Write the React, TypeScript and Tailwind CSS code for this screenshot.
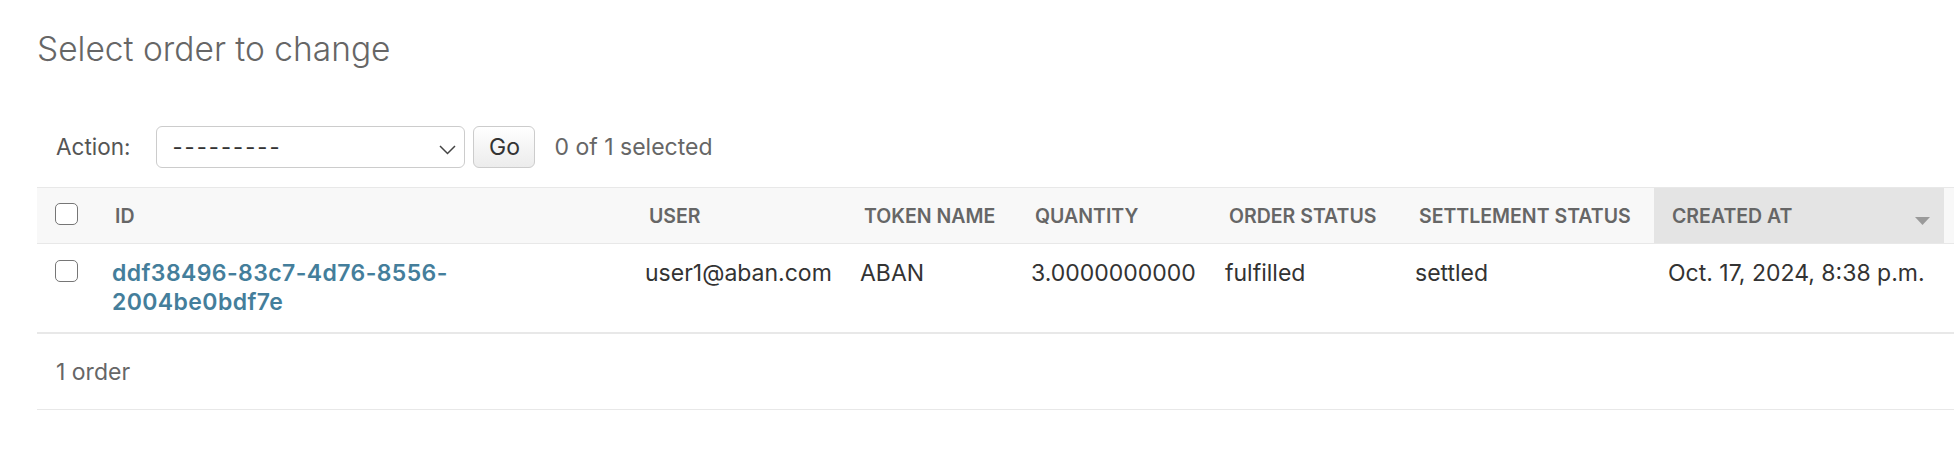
import React from "react";

function Box() {
  return (
    <span className="block w-[23px] h-[22px] rounded-[5px] border-[1.5px] border-[#767676] bg-white" />
  );
}

export default function App() {
  return (
    <div className="min-h-screen bg-white text-[#333] font-['Inter',sans-serif]">
      <div className="pl-[37px]">
        <h1 className="pt-[29px] text-[33.5px] leading-[40px] font-light text-[#666]">
          Select order to change
        </h1>

        <div className="mt-[57px] flex items-center h-[42px] pl-[19px]">
          <span className="text-[22.5px] text-[#555]">Action:</span>
          <div className="ml-[26px] w-[309px] h-[42px] border border-[#ccc] rounded-[6px] bg-white flex items-center justify-between pl-[15px] pr-[8px]">
            <span className="text-[22px] tracking-[2px] text-[#333]">---------</span>
            <svg width="17" height="10" viewBox="0 0 17 10" className="mt-[6px]">
              <path d="M1 1 L8.5 8.5 L16 1" fill="none" stroke="#444" strokeWidth="1.5" />
            </svg>
          </div>
          <div className="ml-[8px] w-[62px] h-[42px] border border-[#ccc] rounded-[6px] bg-gradient-to-b from-white to-[#ececec] flex items-center justify-center text-[23px] text-[#333]">
            Go
          </div>
          <span className="ml-[19px] text-[23px] text-[#666]">0 of 1 selected</span>
        </div>

        <table className="mt-[19px] w-[1917px] table-fixed border-separate border-spacing-0">
          <colgroup>
            <col className="w-[60px]" />
            <col className="w-[534px]" />
            <col className="w-[215px]" />
            <col className="w-[171px]" />
            <col className="w-[194px]" />
            <col className="w-[190px]" />
            <col className="w-[253px]" />
            <col className="w-[290px]" />
            <col />
          </colgroup>
          <thead>
            <tr className="text-[19.5px] font-semibold uppercase text-[#666] text-left">
              <th className="p-0 bg-[#f8f8f8] border-y border-[#e8e8e8]">
                <div className="h-[55px] flex items-center justify-center pb-[4px] pr-[1px]">
                  <Box />
                </div>
              </th>
              {["ID", "User", "Token name", "Quantity", "Order status", "Settlement status"].map((h) => (
                <th key={h} className="p-0 bg-[#f8f8f8] border-y border-[#e8e8e8] font-semibold">
                  <div className="h-[55px] flex items-center pl-[18px] pt-[2px] whitespace-nowrap">{h}</div>
                </th>
              ))}
              <th className="p-0 bg-[#e4e4e4] border-y border-[#e8e8e8] font-semibold">
                <div className="h-[55px] flex items-center justify-between pl-[18px] pr-[14px] pt-[2px] whitespace-nowrap">
                  <span>Created at</span>
                  <svg width="15" height="8" viewBox="0 0 15 8" className="mt-[8px]">
                    <polygon points="0,0 15,0 7.5,8" fill="#9a9a9a" />
                  </svg>
                </div>
              </th>
              <th className="p-0 bg-[#f8f8f8] border-y border-[#e8e8e8]">
                <div className="h-[55px]" />
              </th>
            </tr>
          </thead>
          <tbody>
            <tr className="text-[23px] leading-[29px] align-top">
              <td className="p-0 border-b border-[#e8e8e8]">
                <div className="flex justify-center pt-[16px] pr-[1px]">
                  <Box />
                </div>
              </td>
              <th className="p-0 border-b border-[#e8e8e8] text-left font-semibold">
                <div className="pt-[15px] pb-[15px] pl-[15px] pr-[14px] text-[#447e9b] tracking-[0.4px]">
                  ddf38496-83c7-4d76-8556-
                  <br />
                  2004be0bdf7e
                </div>
              </th>
              {["user1@aban.com", "ABAN", "3.0000000000", "fulfilled", "settled", "Oct. 17, 2024, 8:38 p.m."].map((v) => (
                <td key={v} className="p-0 border-b border-[#e8e8e8]">
                  <div className="pt-[15px] pb-[15px] pl-[14px] whitespace-nowrap">{v}</div>
                </td>
              ))}
              <td className="p-0 border-b border-[#e8e8e8]" />
            </tr>
          </tbody>
        </table>

        <div className="w-[1917px] border-y border-[#e8e8e8] pt-[18px] pb-[17px] pl-[19px] text-[23px] leading-[40px] text-[#666]">
          1 order
        </div>
      </div>
    </div>
  );
}
